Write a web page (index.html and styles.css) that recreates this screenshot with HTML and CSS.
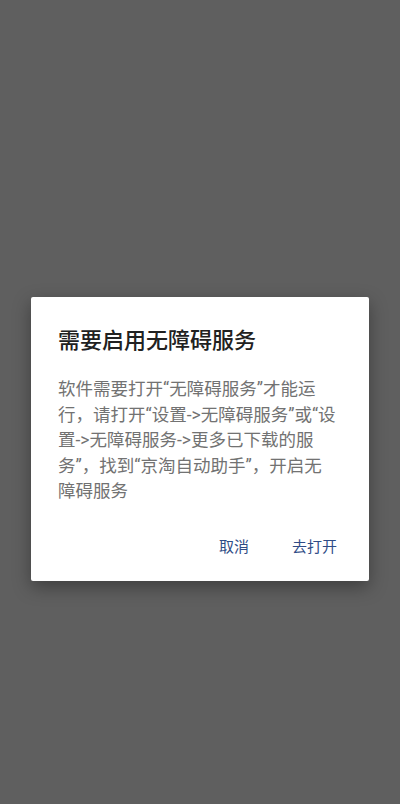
FILE: index.html
```html
<!DOCTYPE html>
<html lang="zh-CN">
<head>
<meta charset="utf-8">
<title>需要启用无障碍服务</title>
<link rel="stylesheet" href="styles.css">
</head>
<body>
<div class="screen">
  <div class="dialog">
    <h1 class="title">需要启用无障碍服务</h1>
    <p class="message">软件需要打开“无障碍服务”才能运<br>行，请打开“设置-&gt;无障碍服务”或“设<br>置-&gt;无障碍服务-&gt;更多已下载的服<br>务”，找到“京淘自动助手”，开启无<br>障碍服务</p>
    <div class="actions">
      <button class="btn">取消</button>
      <button class="btn">去打开</button>
    </div>
  </div>
</div>
</body>
</html>
```
FILE: styles.css
```css
html, body {
  margin: 0;
  padding: 0;
}
body {
  background: #5f5f5f;
  font-family: Roboto, "Noto Sans CJK SC", sans-serif;
}
.screen {
  width: 400px;
  height: 804px;
  display: flex;
  flex-direction: column;
  align-items: center;
  padding-top: 297px;
  box-sizing: border-box;
}
.dialog {
  width: 338px;
  height: 284px;
  box-sizing: border-box;
  background: #ffffff;
  border-radius: 2px;
  box-shadow: 0 6px 18px rgba(0, 0, 0, 0.35);
  padding: 30px 20px 0 27px;
  display: flex;
  flex-direction: column;
}
.title {
  margin: 0;
  font-size: 22px;
  line-height: 28px;
  font-weight: 500;
  color: #212121;
}
.message {
  margin: 22px 0 0 0;
  font-size: 17.5px;
  line-height: 25.5px;
  color: #727272;
  white-space: nowrap;
}
.actions {
  margin-top: 24px;
  margin-right: 12px;
  display: flex;
  justify-content: flex-end;
  gap: 43px;
}
.btn {
  border: 0;
  background: transparent;
  padding: 0;
  height: 36px;
  font-family: inherit;
  font-size: 15px;
  line-height: 36px;
  color: #2f4c86;
}
```
